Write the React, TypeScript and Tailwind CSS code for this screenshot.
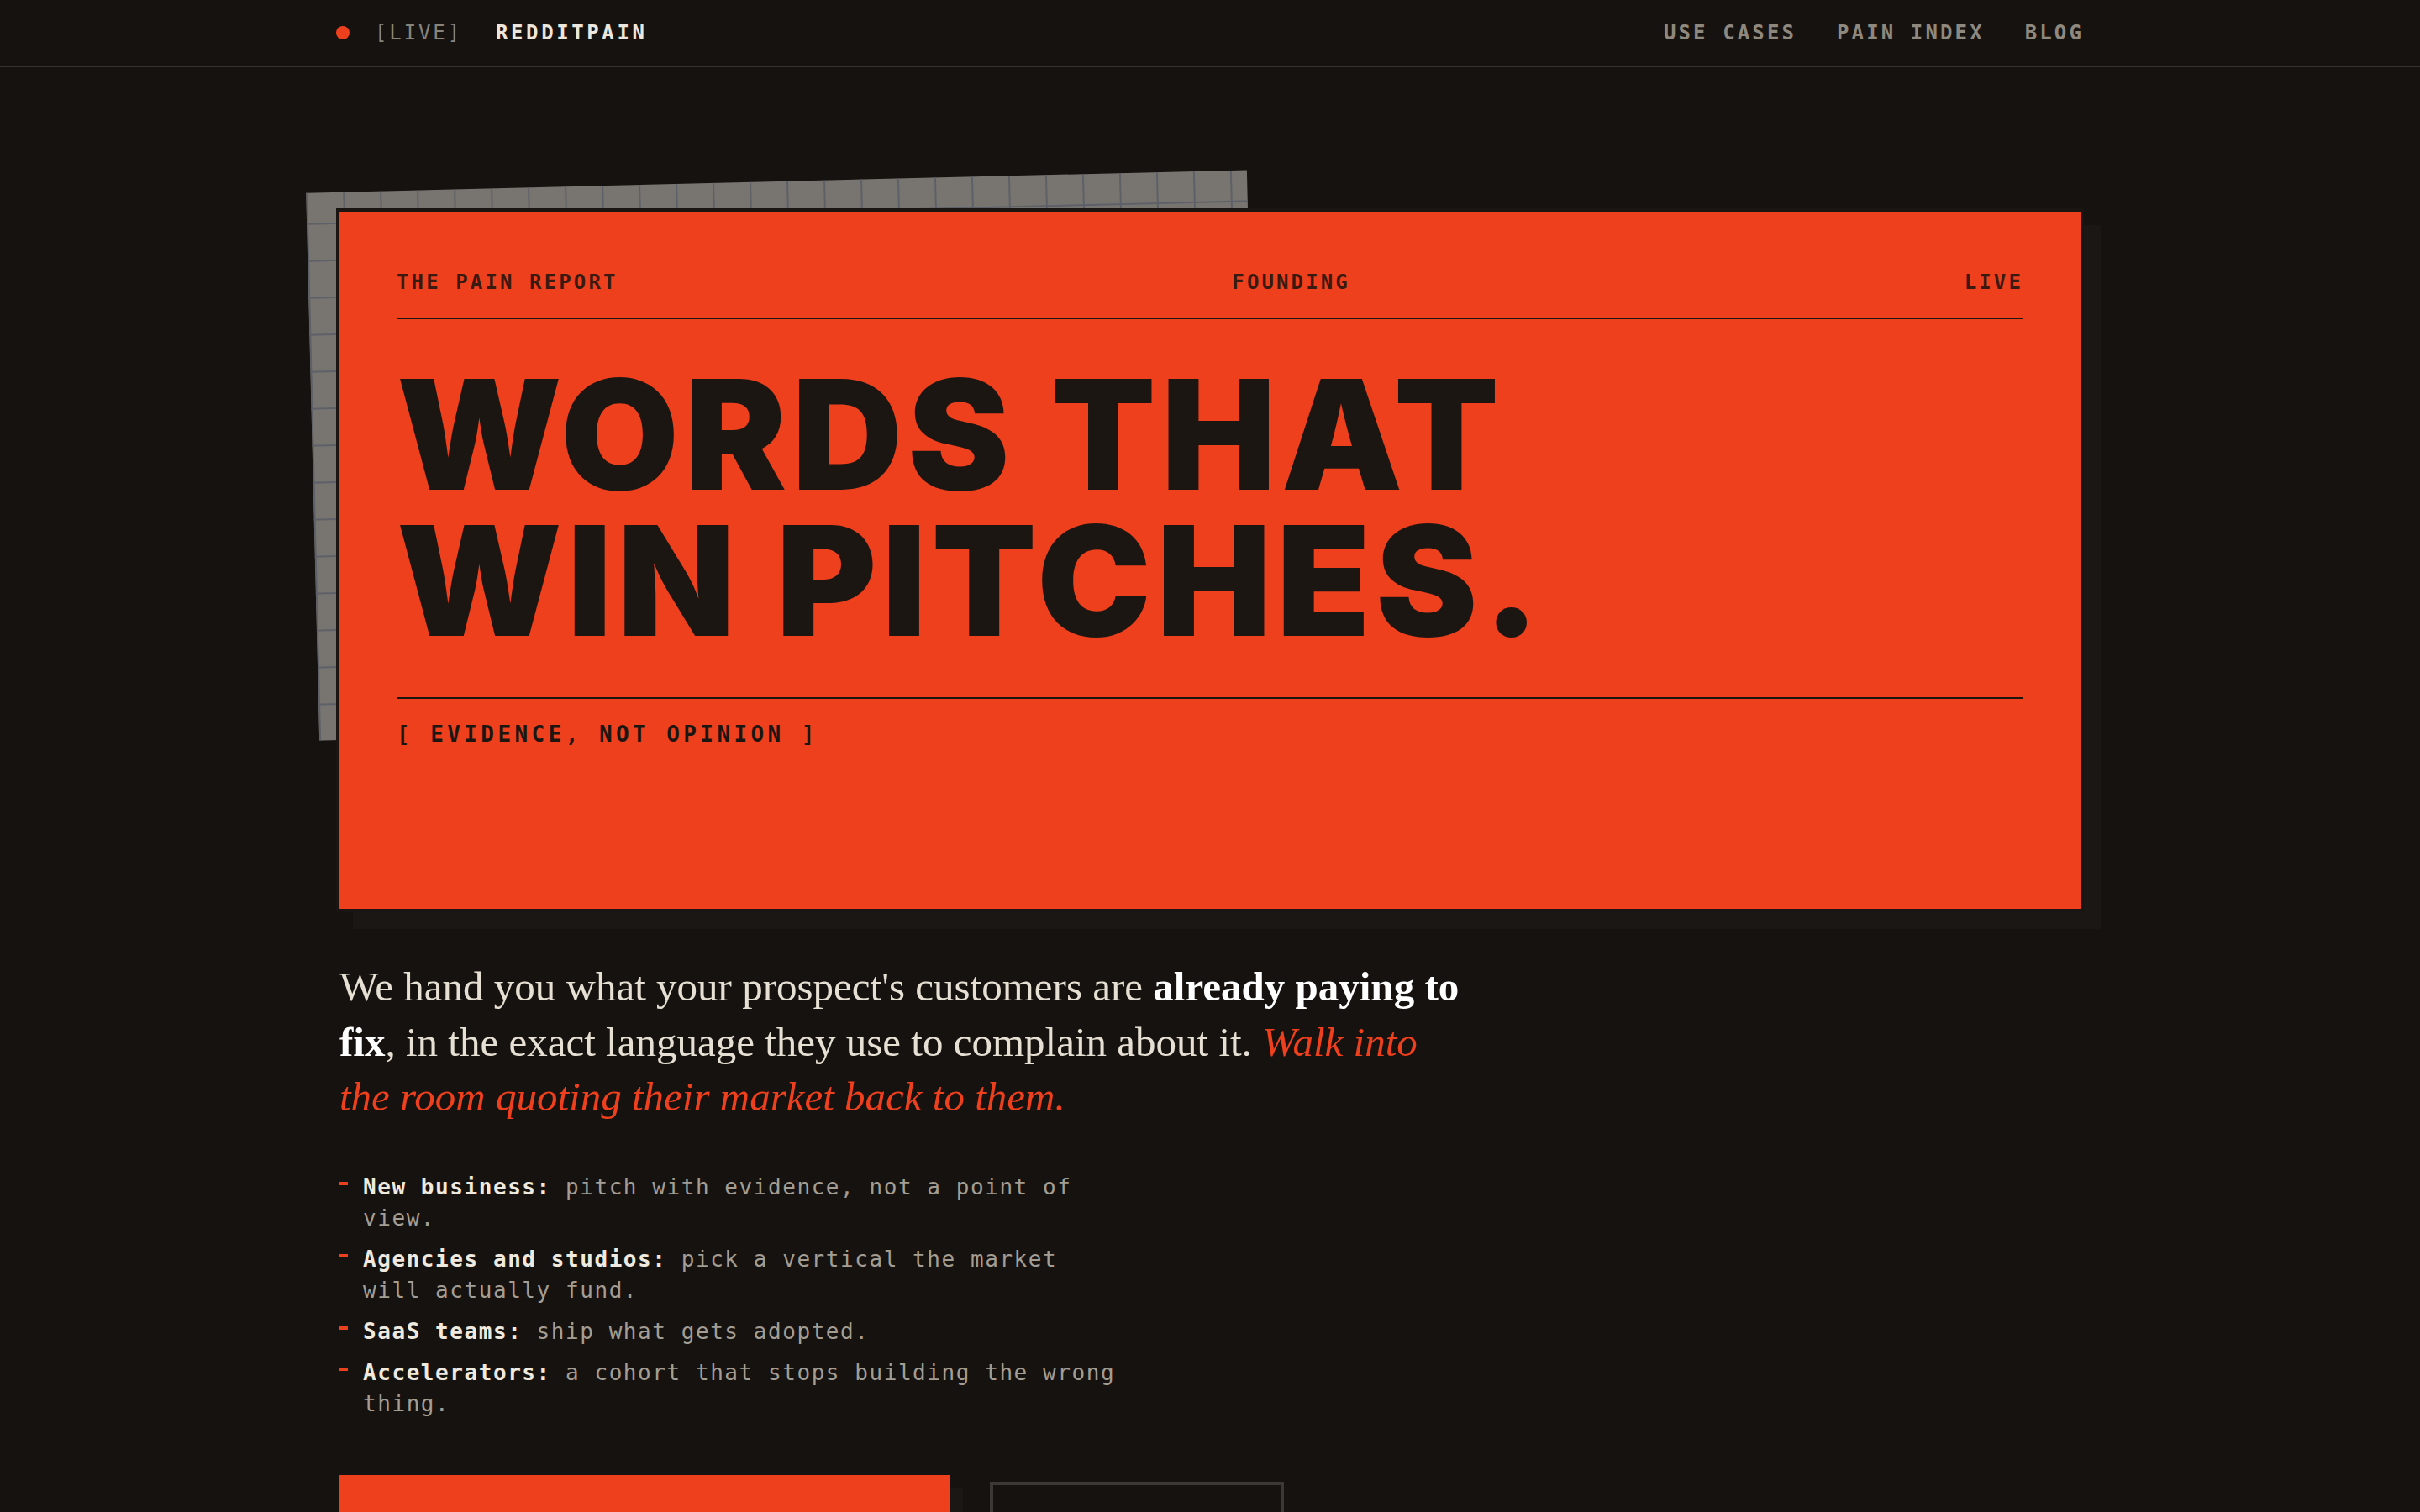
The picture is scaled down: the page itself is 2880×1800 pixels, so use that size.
import { ArrowRight } from "lucide-react";

const mono = "font-['DejaVu_Sans_Mono','Liberation_Mono',monospace]";

const navLinks = ["USE CASES", "PAIN INDEX", "BLOG"];

const audiences = [
  { label: "New business:", text: "pitch with evidence, not a point of view." },
  { label: "Agencies and studios:", text: "pick a vertical the market will actually fund." },
  { label: "SaaS teams:", text: "ship what gets adopted." },
  { label: "Accelerators:", text: "a cohort that stops building the wrong thing." },
];

function TopBar() {
  return (
    <header className="border-b-2 border-[#38332f]">
      <div className={`mx-auto flex h-[78px] max-w-[2080px] items-center justify-between ${mono} text-[24px]`}>
        <div className="flex items-center">
          <span className="h-4 w-4 rounded-full bg-[#ef401e]" />
          <span className="ml-[30px] tracking-[0.12em] text-[#8a847a]">[LIVE]</span>
          <span className="ml-[40px] font-bold tracking-[0.15em] text-[#ece6dc]">REDDITPAIN</span>
        </div>
        <nav className="flex items-center gap-12">
          {navLinks.map((link) => (
            <a key={link} href="#" className="font-bold tracking-[0.13em] text-[#8f887e] hover:text-[#ece6dc]">
              {link}
            </a>
          ))}
        </nav>
      </div>
    </header>
  );
}

function ReportCard() {
  return (
    <section className="relative mt-[168px]">
      {/* grid paper tucked behind the card */}
      <div className="absolute left-[-28px] top-[-32px] h-[652px] w-[1120px] rotate-[-1.4deg] bg-[#787570] bg-[image:linear-gradient(to_right,#5d6068_2px,transparent_2px),linear-gradient(to_bottom,#5d6068_2px,transparent_2px)] bg-[size:44px_44px] bg-[position:0_36px]" />

      <div className="relative z-10 flex min-h-[838px] flex-col border-4 border-[#1a1512] bg-[#ef401e] px-[68px] pt-[68px] shadow-[20px_20px_0_#1b1714]">
        <div className={`flex justify-between border-b-2 border-[#1c1613] pb-[26px] ${mono} text-[24px] font-bold leading-8 tracking-[0.13em] text-[#3a1a10]`}>
          <span>THE PAIN REPORT</span>
          <span>FOUNDING</span>
          <span>LIVE</span>
        </div>

        <h1 className="mt-[50px] font-['Inter',sans-serif] text-[182px] font-black leading-[174px] tracking-[0.035em] text-[#1c1613]">
          WORDS THAT
          <br />
          WIN PITCHES.
        </h1>

        <div className={`mt-[52px] border-t-2 border-[#1c1613] pt-[26px] ${mono} text-[26px] font-bold leading-8 tracking-[0.17em] text-[#1c1613]`}>
          [ EVIDENCE, NOT OPINION ]
        </div>
      </div>
    </section>
  );
}

export default function App() {
  return (
    <div className="min-h-screen bg-[#16120f]">
      <TopBar />

      <main className="mx-auto max-w-[2080px] pb-48">
        <ReportCard />

        <div className="pl-[4px]">
          {/* Lede */}
          <p className="mt-[56px] max-w-[1342px] font-['Liberation_Serif',serif] text-[49px] leading-[65.6px] text-[#e6dfd3]">
            We hand you what your prospect's customers are{" "}
            <span className="font-semibold text-white">already paying to fix</span>, in the exact
            language they use to complain about it.{" "}
            <em className="text-[#ef401e]">Walk into the room quoting their market back to them.</em>
          </p>

          {/* Who it's for */}
          <ul className={`mt-[56px] w-[940px] space-y-[12px] ${mono} text-[26px] leading-[37px] tracking-[0.06em]`}>
            {audiences.map((item) => (
              <li key={item.label} className="flex">
                <span className="mt-[12px] h-1 w-[10px] shrink-0 bg-[#ef401e]" />
                <span className="ml-[18px] w-[904px] text-[#a39d93]">
                  <strong className="font-bold text-[#efe9df]">{item.label}</strong> {item.text}
                </span>
              </li>
            ))}
          </ul>

          {/* CTAs */}
          <div className={`mt-[66px] flex items-start gap-12 ${mono} text-[26px] font-bold tracking-[0.12em]`}>
            <a
              href="#"
              className="flex w-[726px] items-center justify-between bg-[#ef401e] px-12 py-14 text-[#1c1613] shadow-[16px_16px_0_#1b1714]"
            >
              <span>GET THE PAIN REPORT</span>
              <ArrowRight className="h-8 w-8" strokeWidth={2.5} />
            </a>
            <a
              href="#"
              className="mt-[8px] flex w-[350px] items-center justify-center border-4 border-[#3c3834] py-12 text-[#ece6dc]"
            >
              SEE A SAMPLE
            </a>
          </div>
        </div>
      </main>
    </div>
  );
}
